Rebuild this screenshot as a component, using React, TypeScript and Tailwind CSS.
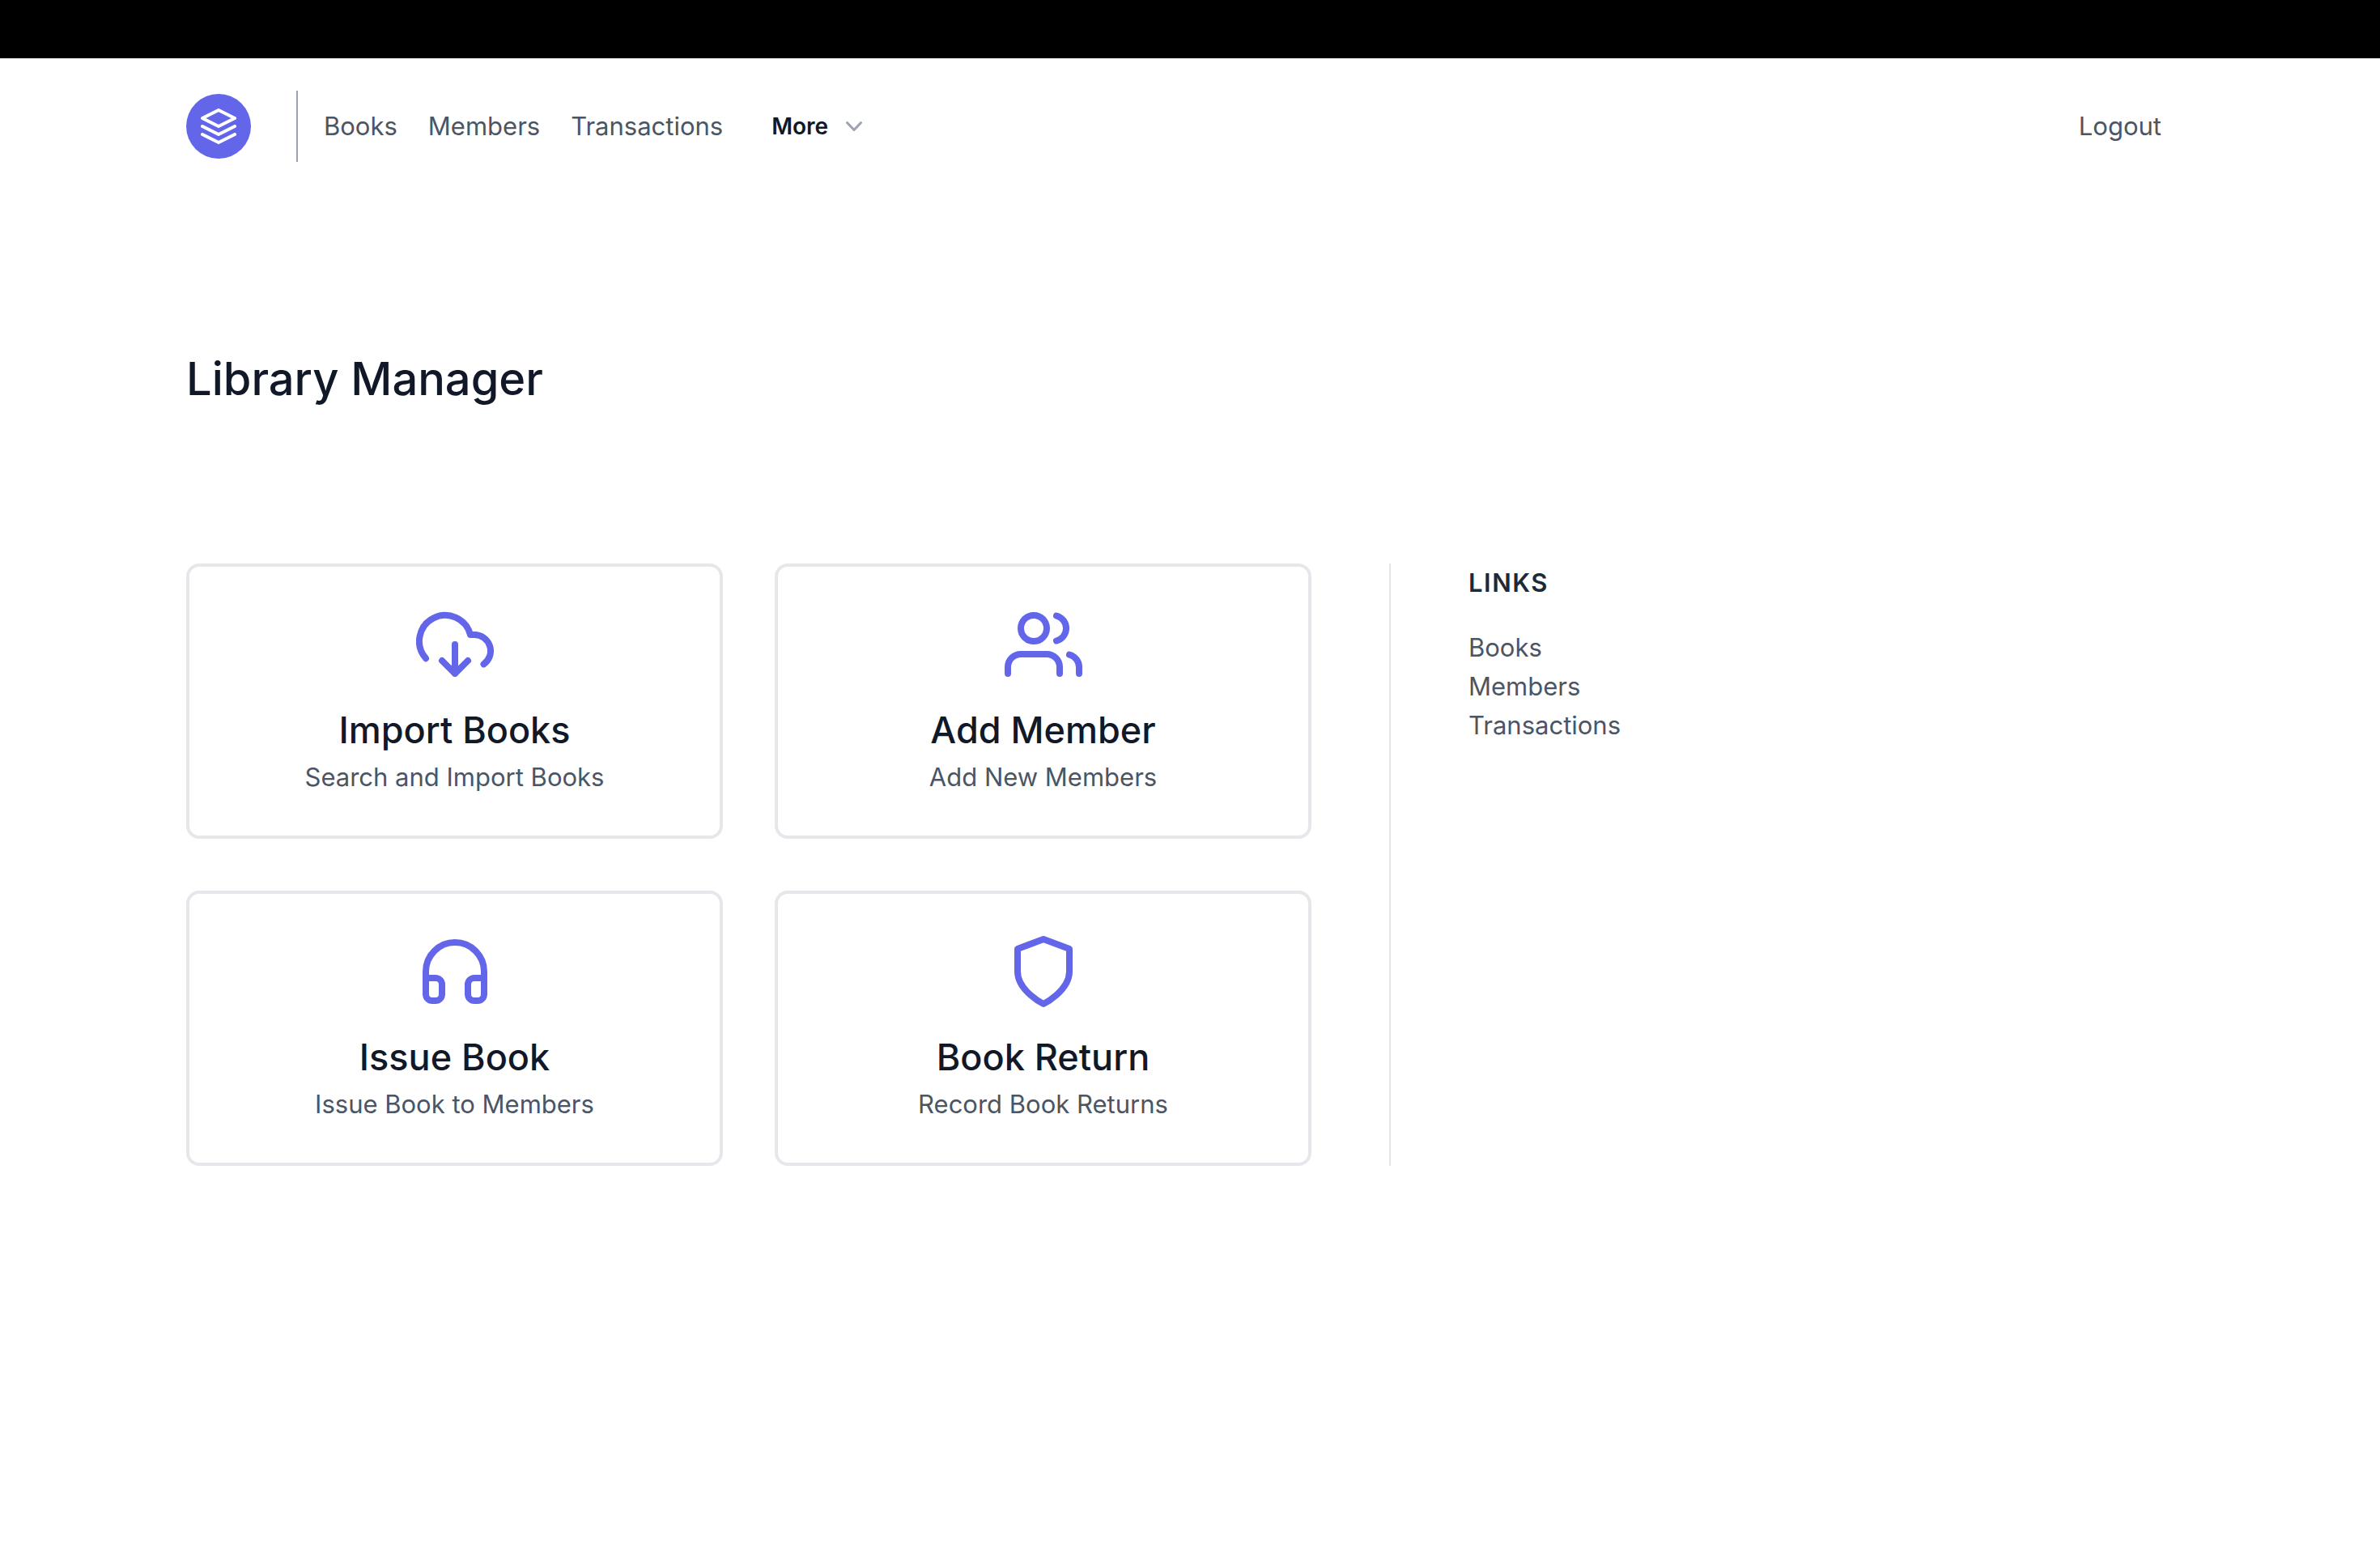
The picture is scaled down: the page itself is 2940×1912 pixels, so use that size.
import type { ReactNode } from "react";

const navLinks = ["Books", "Members", "Transactions"];

function Icon({ className, children }: { className: string; children: ReactNode }) {
  return (
    <svg
      viewBox="0 0 24 24"
      fill="none"
      stroke="currentColor"
      strokeWidth="2"
      strokeLinecap="round"
      strokeLinejoin="round"
      className={className}
      aria-hidden="true"
    >
      {children}
    </svg>
  );
}

const cards: { title: string; text: string; icon: ReactNode }[] = [
  {
    title: "Import Books",
    text: "Search and Import Books",
    icon: <path d="M8 17l4 4 4-4m-4-5v9M20.88 18.09A5 5 0 0018 9h-1.26A8 8 0 103 16.29" />,
  },
  {
    title: "Add Member",
    text: "Add New Members",
    icon: (
      <>
        <path d="M17 21v-2a4 4 0 00-4-4H5a4 4 0 00-4 4v2" />
        <circle cx="9" cy="7" r="4" />
        <path d="M23 21v-2a4 4 0 00-3-3.87M16 3.13a4 4 0 010 7.75" />
      </>
    ),
  },
  {
    title: "Issue Book",
    text: "Issue Book to Members",
    icon: (
      <>
        <path d="M3 18v-6a9 9 0 0118 0v6" />
        <path d="M21 19a2 2 0 01-2 2h-1a2 2 0 01-2-2v-3a2 2 0 012-2h3zM3 19a2 2 0 002 2h1a2 2 0 002-2v-3a2 2 0 00-2-2H3z" />
      </>
    ),
  },
  {
    title: "Book Return",
    text: "Record Book Returns",
    icon: <path d="M12 22s8-4 8-10V5l-8-3-8 3v7c0 6 8 10 8 10z" />,
  },
];

export default function App() {
  return (
    <div className="min-h-screen bg-white font-['Inter',sans-serif] text-[31px] leading-12 text-[#4b5563]">
      <div className="h-18 bg-black" />
      <div className="mx-auto max-w-[2560px] px-10">
        <header className="flex items-center justify-between py-10 pr-10">
          <div className="flex items-center">
            <a href="#" aria-label="Home" className="rounded-full bg-[#6366e9] p-4 text-white">
              <Icon className="size-12">
                <path d="M12 2L2 7l10 5 10-5-10-5zM2 17l10 5 10-5M2 12l10 5 10-5" />
              </Icon>
            </a>
            <nav className="ml-14 flex h-22 items-center gap-[38px] border-l-2 border-[#9ca3af] pl-8">
              {navLinks.map((label) => (
                <a key={label} href="#">
                  {label}
                </a>
              ))}
            </nav>
            <button type="button" className="ml-15 flex items-center gap-3 text-[28px] font-semibold text-[#111827]">
              More
              <svg
                viewBox="0 0 40 40"
                fill="none"
                stroke="currentColor"
                strokeWidth="3"
                strokeLinecap="round"
                strokeLinejoin="round"
                className="size-10 text-[#9ca3af]"
                aria-hidden="true"
              >
                <path d="M11.5 15.5l8.5 9 8.5-9" />
              </svg>
            </button>
          </div>
          <a href="#">Logout</a>
        </header>

        <main className="pt-48">
          <h1 className="text-[56px] leading-18 font-medium text-[#111827]">Library Manager</h1>
          <div className="mt-48 grid grid-cols-[1390fr_994fr] gap-24">
            <section className="grid grid-cols-2 gap-16">
              {cards.map((card) => (
                <a
                  key={card.title}
                  href="#"
                  className="flex flex-col items-center rounded-2xl border-4 border-[#e5e7eb] py-12"
                >
                  <Icon className="size-24 text-[#6366e9]">{card.icon}</Icon>
                  <h2 className="mt-6 text-[45px] leading-17 font-medium text-[#111827]">{card.title}</h2>
                  <p>{card.text}</p>
                </a>
              ))}
            </section>
            <aside className="border-l-2 border-[#e5e7eb] pl-24">
              <h2 className="font-semibold tracking-wider text-[#1f2937]">LINKS</h2>
              <ul className="mt-8">
                {navLinks.map((label) => (
                  <li key={label}>
                    <a href="#">{label}</a>
                  </li>
                ))}
              </ul>
            </aside>
          </div>
        </main>
      </div>
    </div>
  );
}
